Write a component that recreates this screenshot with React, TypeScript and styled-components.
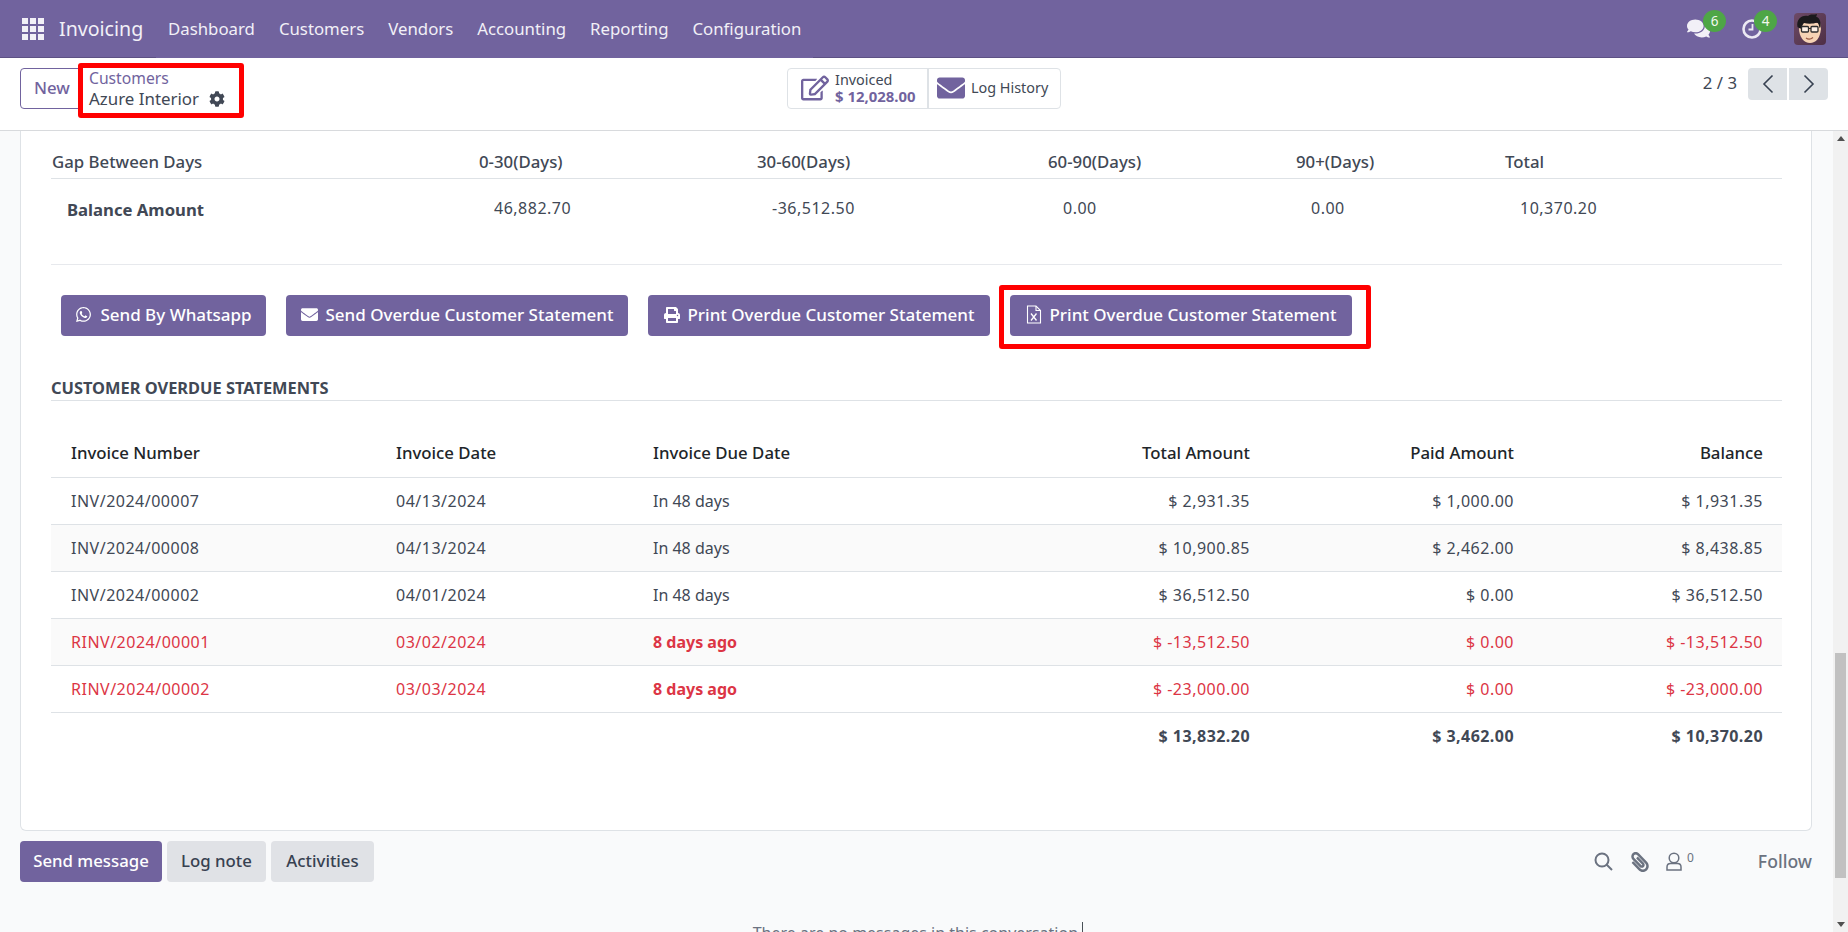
import React from 'react'
import styled, { createGlobalStyle } from 'styled-components'
import { FaWhatsapp, FaEnvelope, FaPrint, FaCog, FaRegEdit, FaComments, FaPaperclip } from 'react-icons/fa'

const GlobalStyle = createGlobalStyle`
  html, body {
    margin: 0;
    height: 100%;
    overflow: hidden;
    background: #f9fafb;
  }
  body {
    font-family: "Noto Sans", "Open Sans", sans-serif;
    font-size: 16px;
    color: #414855;
  }
`

const purple = '#71639e'

const Page = styled.div`
  height: 932px;
  display: flex;
  flex-direction: column;
  overflow: hidden;
`

const Navbar = styled.header`
  height: 57px;
  flex: none;
  display: flex;
  align-items: center;
  background: ${purple};
  border-bottom: 1px solid #5d5184;
  color: #f2f0f7;
`

const AppsButton = styled.div`
  width: 22px;
  height: 22px;
  margin-left: 22px;
  display: grid;
  grid-template-columns: repeat(3, 6px);
  grid-auto-rows: 6px;
  gap: 2px;

  span {
    background: #f2f0f7;
  }
`

const AppName = styled.div`
  margin-left: 15px;
  width: 97px;
  font-size: 19.6px;
`

const Menu = styled.nav`
  align-self: stretch;
  margin-bottom: -1px;
  padding: 0 12px 2px;
  display: flex;
  align-items: center;
  gap: 24px;
  font-size: 16.8px;
  background: ${purple};
`

const NavRight = styled.div`
  margin-left: auto;
  margin-right: 22px;
  display: flex;
  align-items: center;
`

const IconSlot = styled.div<{ $w: number }>`
  position: relative;
  width: ${p => p.$w}px;
  height: 32px;
  display: flex;
  align-items: center;
`

const Badge = styled.span<{ $left: number }>`
  position: absolute;
  top: -3px;
  left: ${p => p.$left}px;
  width: 23px;
  height: 22px;
  border-radius: 50%;
  background: #4ea646;
  color: #f2f8ef;
  font-size: 13.5px;
  display: flex;
  align-items: center;
  justify-content: center;
`

const Avatar = styled.svg`
  display: block;
  width: 32px;
  height: 32px;
  border-radius: 4px;
`

const ControlPanel = styled.div`
  flex: none;
  display: grid;
  grid-template-columns: 1fr auto 1fr;
  background: #fff;
  border-bottom: 1px solid #d8dadd;
  padding: 10px 20px 0;
  height: 62px;
`

const PanelLeft = styled.div`
  display: flex;
  align-items: flex-start;
`

const NewButton = styled.button`
  height: 41px;
  width: 70px;
  flex: none;
  box-sizing: border-box;
  padding: 0 0 2px 13px;
  text-align: left;
  font: 500 16.8px "Noto Sans", sans-serif;
  color: ${purple};
  background: #fff;
  border: 1px solid ${purple};
  border-radius: 4px;
`

const Breadcrumb = styled.div`
  position: relative;
  flex: none;
  width: 166px;
  height: 55px;
  margin: -5px 0 0 -12px;
  box-sizing: border-box;
  padding: 0 0 0 6px;
  background: #fff;
  border: 5px solid #ff0000;
  border-radius: 3px;
`

const CrumbLink = styled.div`
  font-size: 15.7px;
  line-height: 20px;
  color: ${purple};
`

const CrumbTitle = styled.div`
  display: flex;
  align-items: center;
  gap: 10px;
  font-size: 16.9px;
  line-height: 22px;
`

const StatGroup = styled.div`
  display: flex;
  height: 41px;
  box-sizing: border-box;
  background: #fff;
  border: 1px solid #dee2e6;
  border-radius: 4px;
`

const StatButton = styled.div<{ $w: number }>`
  width: ${p => p.$w}px;
  display: flex;
  align-items: center;
  padding: 0 0 2px 13px;
  box-sizing: border-box;

  & + & {
    border-left: 2px solid #dee2e6;
    padding-left: 8px;
  }
`

const StatIcon = styled.span`
  display: flex;
  color: ${purple};
  margin-right: 6px;
`

const StatText = styled.div`
  font-size: 14.4px;
  line-height: 17px;
`

const StatValue = styled.div`
  font-size: 14.9px;
  font-weight: 700;
  color: ${purple};
`

const Pager = styled.div`
  display: flex;
  justify-content: flex-end;
  align-items: flex-start;
`

const PagerText = styled.span`
  margin: 5px 11px 0 0;
  font-size: 16.8px;
  line-height: 20px;
`

const PagerButton = styled.button`
  width: 39px;
  height: 32px;
  padding: 0;
  border: none;
  background: #dee2e6;
  display: flex;
  align-items: center;
  justify-content: center;
  border-radius: 4px 0 0 4px;

  & + & {
    margin-left: 2px;
    border-radius: 0 4px 4px 0;
  }
`

const Body = styled.div`
  flex: 1;
  min-height: 0;
  display: flex;
`

const Main = styled.main`
  flex: 1;
  min-width: 0;
  padding: 0 21px 0 20px;
`

const Sheet = styled.section`
  height: 700px;
  box-sizing: border-box;
  background: #fff;
  border: 1px solid #dee2e6;
  border-top: none;
  border-radius: 0 0 6px 6px;
  padding: 20px 29px 0 30px;
`

const SummaryGrid = styled.div`
  display: grid;
  grid-template-columns: 427px 278px 291px 248px 209px 1fr;
`

const SummaryHead = styled.div`
  height: 27px;
  padding-left: 1px;
  line-height: 22px;
  font-size: 16.8px;
  font-weight: 500;
  border-bottom: 1px solid #dee2e6;
`

const SummaryLabel = styled.div`
  padding: 20px 0 0 16px;
  line-height: 22px;
  font-size: 16.7px;
  font-weight: 700;
`

const SummaryValue = styled.div`
  padding: 18px 0 0 16px;
  line-height: 22px;
  letter-spacing: 0.5px;
`

const Rule = styled.hr`
  margin: 43px 0 0;
  border: none;
  border-top: 1px solid #e7e9ed;
`

const Actions = styled.div`
  display: flex;
  gap: 20px;
  margin: 30px 0 0 10px;
`

const ActionButton = styled.button<{ $w: number }>`
  position: relative;
  width: ${p => p.$w}px;
  height: 41px;
  padding: 0 0 2px;
  flex: none;
  display: flex;
  align-items: center;
  justify-content: center;
  gap: 8px;
  border: none;
  border-radius: 4px;
  background: ${purple};
  color: #fff;
  font: 500 17px "Noto Sans", sans-serif;
`

const Highlight = styled.span`
  position: absolute;
  inset: -10px -19px -13px -11px;
  border: 5px solid #ff0000;
  border-radius: 3px;
`

const SectionTitle = styled.h3`
  margin: 41px 0 0;
  padding-bottom: 1px;
  line-height: 22px;
  font-size: 16.4px;
  font-weight: 700;
  border-bottom: 1px solid #dee2e6;
`

const Table = styled.table`
  width: 100%;
  margin-top: 16px;
  border-collapse: collapse;
  table-layout: fixed;
`

const HeadCell = styled.th<{ $right?: boolean }>`
  height: 47px;
  padding: 0 19px 13px 20px;
  vertical-align: bottom;
  font-size: 16.8px;
  line-height: 22px;
  font-weight: 500;
  color: #212529;
  text-align: ${p => (p.$right ? 'right' : 'left')};
  border-bottom: 1px solid #dee2e6;
`

const Row = styled.tr<{ $overdue?: boolean }>`
  color: ${p => (p.$overdue ? '#dc3545' : 'inherit')};

  &:nth-child(even) {
    background: #fafafa;
  }
`

const Cell = styled.td<{ $right?: boolean; $due?: boolean; $bold?: boolean }>`
  height: 46px;
  padding: 0 19px 0 20px;
  text-align: ${p => (p.$right ? 'right' : 'left')};
  font-weight: ${p => (p.$bold ? 700 : 400)};
  letter-spacing: ${p => (p.$due ? 0 : 0.5)}px;
  border-bottom: 1px solid #dee2e6;
`

const TotalCell = styled.td`
  height: 46px;
  padding: 0 19px 0 20px;
  text-align: right;
  font-weight: 700;
  letter-spacing: 0.45px;
`

const Chatter = styled.div`
  display: flex;
  align-items: center;
  margin-top: 10px;
  gap: 5px;
`

const ChatButton = styled.button<{ $primary?: boolean; $w: number }>`
  width: ${p => p.$w}px;
  height: 41px;
  padding: 0 0 2px;
  border: none;
  border-radius: 4px;
  background: ${p => (p.$primary ? purple : '#e0e2e6')};
  color: ${p => (p.$primary ? '#fff' : '#374151')};
  font: 500 16.8px "Noto Sans", sans-serif;
`

const ChatTools = styled.div`
  margin-left: auto;
  display: flex;
  align-items: center;
  color: #6b7280;
`

const ToolIcon = styled.span<{ $gap: number; $flip?: boolean }>`
  display: flex;
  margin-right: ${p => p.$gap}px;
  ${p => p.$flip && 'transform: scaleX(-1);'}
`

const Followers = styled.sup`
  font-size: 12px;
  line-height: 12px;
  margin: 0 64px 8px 5px;
`

const FollowLabel = styled.span`
  font-size: 17.6px;
  font-weight: 500;
  padding-bottom: 2px;
`

const EmptyNote = styled.div`
  margin-top: 41px;
  padding-left: 4px;
  text-align: center;
  line-height: 20px;
  color: #6b7280;

  i {
    border-right: 1px solid #495057;
    font-style: normal;
  }
`

const ScrollTrack = styled.div`
  width: 15px;
  flex: none;
  display: flex;
  flex-direction: column;
  align-items: center;
  background: #f1f1f1;
`

const ScrollArrow = styled.span<{ $up?: boolean }>`
  width: 0;
  height: 0;
  margin: 5px 0;
  border-left: 4px solid transparent;
  border-right: 4px solid transparent;
  ${p => (p.$up ? 'border-bottom: 5px solid #505050;' : 'border-top: 5px solid #505050;')}
`

const ScrollThumb = styled.div`
  width: 11px;
  height: 225px;
  margin-top: 507px;
  margin-bottom: auto;
  background: #c1c1c1;
`

const AvatarArt = () => (
  <Avatar viewBox="0 0 32 32">
    <defs>
      <linearGradient id="avatarBg" x1="0" y1="0" x2="1" y2="1">
        <stop offset="0" stopColor="#6d4a66" />
        <stop offset="1" stopColor="#4e2f45" />
      </linearGradient>
    </defs>
    <rect width="32" height="32" fill="url(#avatarBg)" />
    <path d="M5 15c0 9 5 15 11 15s10-5 11-14l-1-6H6z" fill="#f6d3b4" />
    <path d="M3.500 14C2 6 8 1.500 14 3c3-2.500 6-1 9-2 0 1.500-1 2.500-1 2.500 3 1 5 4 4.500 10.500l-1 1c-.5-3-1-4.500-2.500-5.500-4 1.500-9 1.500-13 .5-1.500 1.500-2 3-2 5.500H6z" fill="#1b1a1c" />
    <rect x="7.500" y="13.500" width="7" height="5.500" rx="1" fill="#fff" fillOpacity=".65" stroke="#2c2c2c" strokeWidth="1.300" />
    <rect x="17" y="13.500" width="7" height="5.500" rx="1" fill="#fff" fillOpacity=".65" stroke="#2c2c2c" strokeWidth="1.300" />
    <path d="M14.500 15.500H17" stroke="#2c2c2c" strokeWidth="1.200" />
    <path d="M12 25c2 1.500 5 1.200 7-.5" stroke="#9a5a44" strokeWidth="1.200" fill="none" />
  </Avatar>
)

const ClockIcon = () => (
  <svg width="20" height="20" viewBox="0 0 20 20" fill="none" stroke="#ece9f3">
    <circle cx="10" cy="10" r="8.500" strokeWidth="2.600" />
    <path d="M10.500 5v5.500H6.500" strokeWidth="1.800" />
  </svg>
)

const Chevron = ({ left }: { left?: boolean }) => (
  <svg width="12" height="20" viewBox="0 0 12 20" fill="none" stroke="#374151" strokeWidth="1.600">
    <path d={left ? 'M10.500 1.500L2 10l8.500 8.500' : 'M1.500 1.500L10 10l-8.500 8.500'} />
  </svg>
)

const SearchIcon = () => (
  <svg width="19" height="19" viewBox="0 0 19 19" fill="none" stroke="currentColor" strokeWidth="2">
    <circle cx="8" cy="8" r="6.500" />
    <path d="M12.500 12.500L18 18" />
  </svg>
)

const PersonIcon = () => (
  <svg width="16" height="19" viewBox="0 0 16 19" fill="none" stroke="currentColor" strokeWidth="1.500">
    <circle cx="8" cy="6" r="4.800" />
    <path d="M1 18v-3c0-2 1.500-3.500 3.500-3.500h7c2 0 3.500 1.500 3.500 3.500v3z" />
  </svg>
)

const ExcelFileIcon = () => (
  <svg width="16" height="19" viewBox="0 0 16 19" fill="none" stroke="#fff" strokeWidth="1.100">
    <path d="M1.500 1h8.500l4.500 4.500V18h-13z" />
    <path d="M10 1v4.500h4.500" />
    <path d="M5 8.500l5.500 7M10.500 8.500l-5.500 7" strokeWidth="1.300" />
  </svg>
)

const menuItems = ['Dashboard', 'Customers', 'Vendors', 'Accounting', 'Reporting', 'Configuration']

const summaryHeads = ['Gap Between Days', '0-30(Days)', '30-60(Days)', '60-90(Days)', '90+(Days)', 'Total']
const summaryValues = ['46,882.70', '-36,512.50', '0.00', '0.00', '10,370.20']

const invoices = [
  { no: 'INV/2024/00007', date: '04/13/2024', due: 'In 48 days', total: '$ 2,931.35', paid: '$ 1,000.00', balance: '$ 1,931.35' },
  { no: 'INV/2024/00008', date: '04/13/2024', due: 'In 48 days', total: '$ 10,900.85', paid: '$ 2,462.00', balance: '$ 8,438.85' },
  { no: 'INV/2024/00002', date: '04/01/2024', due: 'In 48 days', total: '$ 36,512.50', paid: '$ 0.00', balance: '$ 36,512.50' },
  { no: 'RINV/2024/00001', date: '03/02/2024', due: '8 days ago', total: '$ -13,512.50', paid: '$ 0.00', balance: '$ -13,512.50', overdue: true },
  { no: 'RINV/2024/00002', date: '03/03/2024', due: '8 days ago', total: '$ -23,000.00', paid: '$ 0.00', balance: '$ -23,000.00', overdue: true },
]

export default function App() {
  return (
    <Page>
      <GlobalStyle />
      <Navbar>
        <AppsButton>
          {Array.from({ length: 9 }, (_, i) => <span key={i} />)}
        </AppsButton>
        <AppName>Invoicing</AppName>
        <Menu>
          {menuItems.map(item => <span key={item}>{item}</span>)}
        </Menu>
        <NavRight>
          <IconSlot $w={55}>
            <FaComments size={23} />
            <Badge $left={16}>6</Badge>
          </IconSlot>
          <IconSlot $w={52}>
            <ClockIcon />
            <Badge $left={12}>4</Badge>
          </IconSlot>
          <AvatarArt />
        </NavRight>
      </Navbar>

      <ControlPanel>
        <PanelLeft>
          <NewButton>New</NewButton>
          <Breadcrumb>
            <CrumbLink>Customers</CrumbLink>
            <CrumbTitle>Azure Interior <FaCog size={16} /></CrumbTitle>
          </Breadcrumb>
        </PanelLeft>
        <StatGroup>
          <StatButton $w={139}>
            <StatIcon><FaRegEdit size={28} /></StatIcon>
            <StatText>
              Invoiced
              <StatValue>$ 12,028.00</StatValue>
            </StatText>
          </StatButton>
          <StatButton $w={133}>
            <StatIcon><FaEnvelope size={28} /></StatIcon>
            <StatText>Log History</StatText>
          </StatButton>
        </StatGroup>
        <Pager>
          <PagerText>2 / 3</PagerText>
          <PagerButton><Chevron left /></PagerButton>
          <PagerButton><Chevron /></PagerButton>
        </Pager>
      </ControlPanel>

      <Body>
        <Main>
          <Sheet>
            <SummaryGrid>
              {summaryHeads.map(h => <SummaryHead key={h}>{h}</SummaryHead>)}
              <SummaryLabel>Balance Amount</SummaryLabel>
              {summaryValues.map((v, i) => <SummaryValue key={i}>{v}</SummaryValue>)}
            </SummaryGrid>
            <Rule />
            <Actions>
              <ActionButton $w={205}><FaWhatsapp size={17} /> Send By Whatsapp</ActionButton>
              <ActionButton $w={342}><FaEnvelope size={17} /> Send Overdue Customer Statement</ActionButton>
              <ActionButton $w={342}><FaPrint size={16} /> Print Overdue Customer Statement</ActionButton>
              <ActionButton $w={342}>
                <ExcelFileIcon /> Print Overdue Customer Statement
                <Highlight />
              </ActionButton>
            </Actions>
            <SectionTitle>CUSTOMER OVERDUE STATEMENTS</SectionTitle>
            <Table>
              <colgroup>
                <col style={{ width: 325 }} />
                <col style={{ width: 257 }} />
                <col style={{ width: 280 }} />
                <col style={{ width: 356 }} />
                <col style={{ width: 264 }} />
                <col />
              </colgroup>
              <thead>
                <tr>
                  <HeadCell>Invoice Number</HeadCell>
                  <HeadCell>Invoice Date</HeadCell>
                  <HeadCell>Invoice Due Date</HeadCell>
                  <HeadCell $right>Total Amount</HeadCell>
                  <HeadCell $right>Paid Amount</HeadCell>
                  <HeadCell $right>Balance</HeadCell>
                </tr>
              </thead>
              <tbody>
                {invoices.map(inv => (
                  <Row key={inv.no} $overdue={inv.overdue}>
                    <Cell>{inv.no}</Cell>
                    <Cell>{inv.date}</Cell>
                    <Cell $due $bold={inv.overdue}>{inv.due}</Cell>
                    <Cell $right>{inv.total}</Cell>
                    <Cell $right>{inv.paid}</Cell>
                    <Cell $right>{inv.balance}</Cell>
                  </Row>
                ))}
              </tbody>
              <tfoot>
                <tr>
                  <TotalCell colSpan={3} />
                  <TotalCell>$ 13,832.20</TotalCell>
                  <TotalCell>$ 3,462.00</TotalCell>
                  <TotalCell>$ 10,370.20</TotalCell>
                </tr>
              </tfoot>
            </Table>
          </Sheet>
          <Chatter>
            <ChatButton $primary $w={142}>Send message</ChatButton>
            <ChatButton $w={99}>Log note</ChatButton>
            <ChatButton $w={103}>Activities</ChatButton>
            <ChatTools>
              <ToolIcon $gap={17}><SearchIcon /></ToolIcon>
              <ToolIcon $gap={16} $flip><FaPaperclip size={20} /></ToolIcon>
              <ToolIcon $gap={0}><PersonIcon /></ToolIcon>
              <Followers>0</Followers>
              <FollowLabel>Follow</FollowLabel>
            </ChatTools>
          </Chatter>
          <EmptyNote><i>There are no messages in this conversation.</i></EmptyNote>
        </Main>
        <ScrollTrack>
          <ScrollArrow $up />
          <ScrollThumb />
          <ScrollArrow />
        </ScrollTrack>
      </Body>
    </Page>
  )
}
